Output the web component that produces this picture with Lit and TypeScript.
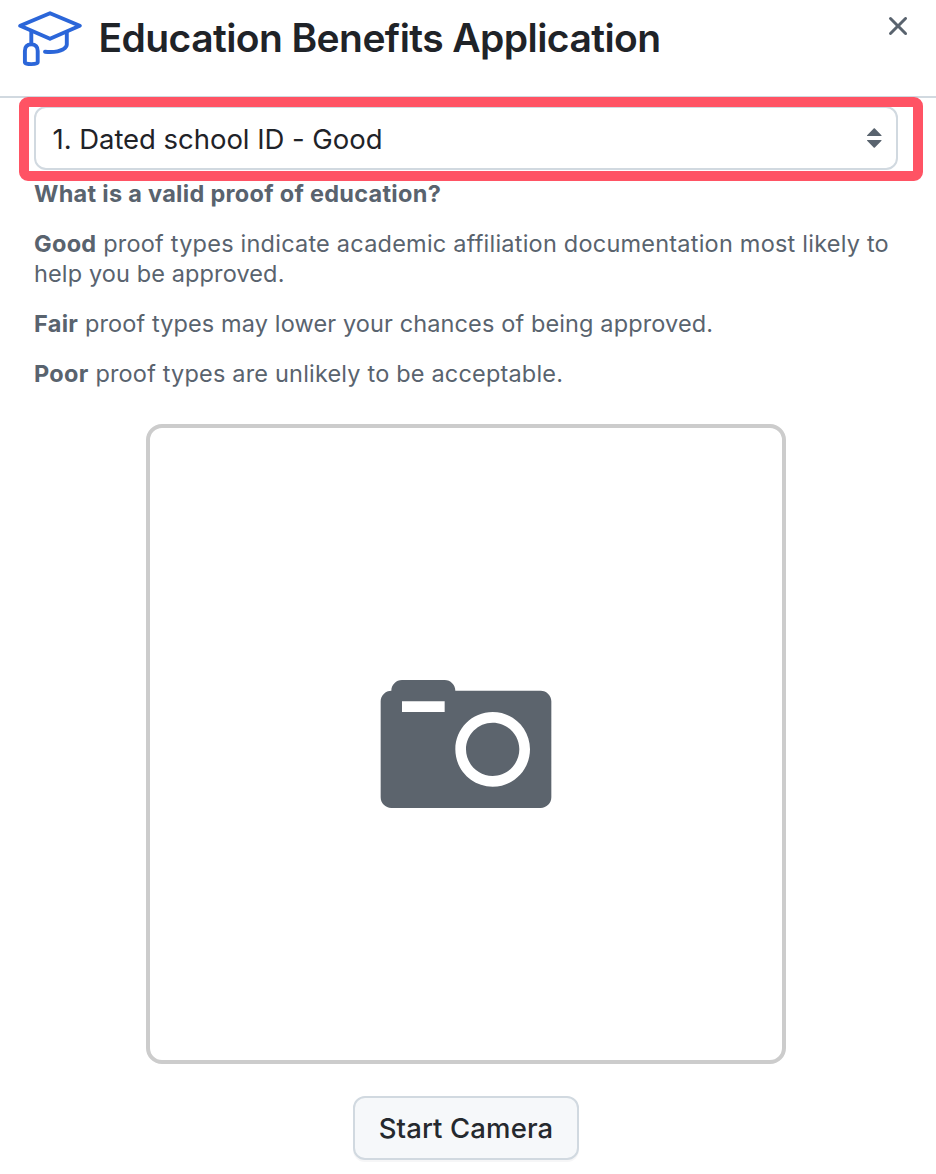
import { LitElement, html, css } from "lit";
import { customElement, property } from "lit/decorators.js";

@customElement("dialog-header")
export class DialogHeader extends LitElement {
  @property() heading = "";

  static styles = css`
    :host {
      display: flex;
      align-items: flex-start;
      box-sizing: border-box;
      height: 98px;
      padding: 0 22px 0 18px;
      border-bottom: 2px solid #d1d9e0;
    }
    .cap {
      flex: none;
      width: 64px;
      height: 64px;
      margin-top: 8px;
    }
    h2 {
      flex: 1;
      margin: 8px 0 0 16.5px;
      font-size: 39px;
      font-weight: 600;
      line-height: 60px;
      letter-spacing: -0.575px;
      color: #1f2328;
      white-space: nowrap;
    }
    button {
      flex: none;
      display: flex;
      margin: 10px 0 0;
      padding: 0;
      border: 0;
      background: none;
      color: #59636e;
    }
  `;

  render() {
    return html`
      <svg class="cap" viewBox="18 8 64 64" fill="none" stroke="#2b66d9" stroke-width="3.9" stroke-linejoin="round" stroke-linecap="round">
        <path d="M50 13.3 79.8 25.8 50 38.7 20.2 25.8Z" />
        <path d="M31.3 31.5V43.5" />
        <path d="M24.9 62.3V51Q24.9 44.4 31.3 44.4T37.7 51V62.3Q37.7 64.1 31.3 64.1T24.9 62.3Z" />
        <path d="M66.8 32.5V44.5Q66.8 47 63.3 49.2C59 51.6 52 52.4 45 51.7" />
      </svg>
      <h2>${this.heading}</h2>
      <button aria-label="Close">
        <svg width="32" height="32" viewBox="0 0 16 16" fill="currentColor">
          <path d="M3.72 3.72a.75.75 0 0 1 1.06 0L8 6.94l3.22-3.22a.749.749 0 0 1 1.275.326.749.749 0 0 1-.215.734L9.06 8l3.22 3.22a.749.749 0 0 1-.326 1.275.749.749 0 0 1-.734-.215L8 9.06l-3.22 3.22a.751.751 0 0 1-1.042-.018.751.751 0 0 1-.018-1.042L6.94 8 3.72 4.78a.75.75 0 0 1 0-1.06Z" />
        </svg>
      </button>
    `;
  }
}

@customElement("proof-select")
export class ProofSelect extends LitElement {
  @property() value = "";

  static styles = css`
    :host {
      display: block;
      position: relative;
      margin: 8px 38px 0 34px;
    }
    .field {
      display: flex;
      align-items: center;
      justify-content: space-between;
      box-sizing: border-box;
      height: 64px;
      padding: 0 5px 0 16.5px;
      border: 2px solid #d1d9e0;
      border-radius: 12px;
      font-size: 27.5px;
      line-height: 40px;
      letter-spacing: -0.04px;
      color: #1f2328;
      background: #fff;
    }
    .text {
      padding-top: 2px;
    }
    .highlight {
      position: absolute;
      inset: -9px -25px -11px -15px;
      border: 10px solid #ff5364;
      border-radius: 9px;
      pointer-events: none;
    }
  `;

  render() {
    return html`
      <div class="field">
        <span class="text">${this.value}</span>
        <svg width="32" height="32" viewBox="0 0 16 16" fill="#59636e">
          <path d="m4.074 9.427 3.396 3.396a.25.25 0 0 0 .354 0l3.396-3.396A.25.25 0 0 0 11.043 9H4.251a.25.25 0 0 0-.177.427ZM4.074 6.573 7.47 3.177a.25.25 0 0 1 .354 0l3.396 3.396a.25.25 0 0 1-.177.427H4.251a.25.25 0 0 1-.177-.427Z" />
        </svg>
      </div>
      <div class="highlight"></div>
    `;
  }
}

@customElement("app-root")
export class AppRoot extends LitElement {
  static styles = css`
    :host {
      display: block;
      box-sizing: border-box;
      height: 1174px;
      overflow: hidden;
      background: #fff;
      font-family: Inter, "Noto Sans", sans-serif;
    }
    .notes {
      margin: 9px 38px 35px 34px;
      font-size: 23.5px;
      line-height: 30px;
      letter-spacing: 0.12px;
      color: #59636e;
    }
    p {
      margin: 0 0 20px;
    }
    p:last-child {
      margin-bottom: 0;
      letter-spacing: 0.18px;
    }
    .wide {
      letter-spacing: 0.22px;
    }
    strong {
      font-weight: 700;
      letter-spacing: 0.29px;
    }
    .capture {
      display: flex;
      flex-direction: column;
      align-items: center;
      gap: 32px;
      width: 640px;
      margin-left: 146px;
    }
    .viewfinder {
      display: flex;
      align-items: center;
      justify-content: center;
      box-sizing: border-box;
      width: 640px;
      height: 640px;
      border: 4px solid #ccc;
      border-radius: 16px;
    }
    .camera {
      width: 192px;
      height: 192px;
    }
    .start {
      box-sizing: border-box;
      width: 226px;
      height: 64px;
      padding: 0;
      border: 2px solid #d1d9e0;
      border-radius: 12px;
      background: #f6f8fa;
      box-shadow: 0 2px 0 rgba(31, 35, 40, 0.04);
      font: 500 27.5px/40px Inter, "Noto Sans", sans-serif;
      letter-spacing: 0.13px;
      color: #25292e;
    }
  `;

  render() {
    return html`
      <dialog-header heading="Education Benefits Application"></dialog-header>
      <proof-select value="1. Dated school ID - Good"></proof-select>
      <div class="notes">
        <p><strong>What is a valid proof of education?</strong></p>
        <p><strong>Good</strong> <span class="wide">proof types indicate academic affiliation documentation most likely to</span> help you be approved.</p>
        <p><strong>Fair</strong> proof types may lower your chances of being approved.</p>
        <p><strong>Poor</strong> proof types are unlikely to be acceptable.</p>
      </div>
      <div class="capture">
        <div class="viewfinder">
          <svg class="camera" viewBox="-1 -1 18 18" fill="#5c646d">
            <path d="M15 3H7c0-.55-.45-1-1-1H2c-.55 0-1 .45-1 1-.55 0-1 .45-1 1v9c0 .55.45 1 1 1h14c.55 0 1-.45 1-1V4c0-.55-.45-1-1-1zM6 5H2V4h4v1zm4.5 7C8.56 12 7 10.44 7 8.5S8.56 5 10.5 5 14 6.56 14 8.5 12.44 12 10.5 12zM13 8.5c0 1.38-1.13 2.5-2.5 2.5S8 9.87 8 8.5 9.13 6 10.5 6 13 7.13 13 8.5z" />
          </svg>
        </div>
        <button class="start">Start Camera</button>
      </div>
    `;
  }
}
